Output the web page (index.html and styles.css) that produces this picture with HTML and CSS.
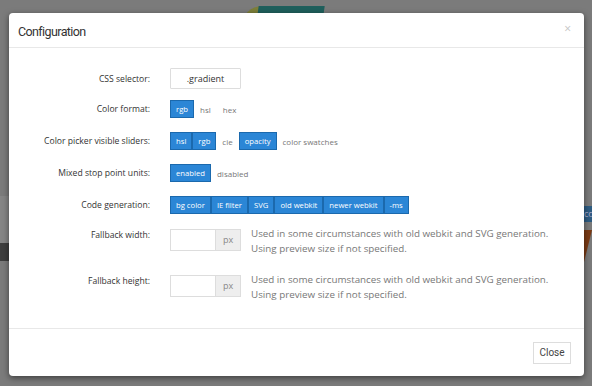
FILE: index.html
```html
<!DOCTYPE html>
<html lang="en">
<head>
    <meta charset="UTF-8">
    <title>Configuration</title>
    <link rel="stylesheet" href="styles.css">
</head>
<body>

<!-- page behind the overlay -->
<div class="backdrop">
    <div class="bg-arc"></div>
    <div class="bg-teal"></div>
    <div class="bg-left-light"></div>
    <div class="bg-left-dark"></div>
    <div class="bg-right-bar">co</div>
    <div class="bg-right-tri"></div>
</div>

<div class="modal">
    <div class="modal-header">
        <h4 class="modal-title">Configuration</h4>
        <span class="close">&times;</span>
    </div>

    <div class="modal-body">
        <div class="row row-input">
            <label>CSS selector:</label>
            <div class="controls">
                <input class="selector" type="text" value=".gradient">
            </div>
        </div>

        <div class="row">
            <label>Color format:</label>
            <div class="controls">
                <span class="btn active">rgb</span>
                <span class="opt">hsl</span>
                <span class="opt">hex</span>
            </div>
        </div>

        <div class="row">
            <label>Color picker visible sliders:</label>
            <div class="controls">
                <span class="btn active">hsl</span>
                <span class="btn active">rgb</span>
                <span class="opt">cie</span>
                <span class="btn active">opacity</span>
                <span class="opt">color swatches</span>
            </div>
        </div>

        <div class="row">
            <label>Mixed stop point units:</label>
            <div class="controls">
                <span class="btn active">enabled</span>
                <span class="opt">disabled</span>
            </div>
        </div>

        <div class="row">
            <label>Code generation:</label>
            <div class="controls">
                <span class="btn active">bg color</span>
                <span class="btn active">IE filter</span>
                <span class="btn active">SVG</span>
                <span class="btn active">old webkit</span>
                <span class="btn active">newer webkit</span>
                <span class="btn active">-ms</span>
            </div>
        </div>

        <div class="row row-size">
            <label>Fallback width:</label>
            <div class="controls">
                <div class="input-append">
                    <input type="text">
                    <span class="add-on">px</span>
                </div>
                <p class="help">Used in some circumstances with old webkit and SVG generation.<br>Using preview size if not specified.</p>
            </div>
        </div>

        <div class="row row-size">
            <label>Fallback height:</label>
            <div class="controls">
                <div class="input-append">
                    <input type="text">
                    <span class="add-on">px</span>
                </div>
                <p class="help">Used in some circumstances with old webkit and SVG generation.<br>Using preview size if not specified.</p>
            </div>
        </div>
    </div>

    <div class="modal-footer">
        <span class="btn-close">Close</span>
    </div>
</div>

</body>
</html>
```

FILE: styles.css
```css
body {
    margin: 0;
    background: #7b7b7b;
    font-family: "Open Sans", sans-serif;
    height: 386px;
    overflow: hidden;
    position: relative;
}

/* bits of the page under the overlay */
.backdrop div {
    position: absolute;
}
.bg-arc {
    left: 242px;
    top: 6px;
    width: 40px;
    height: 20px;
    border-radius: 40px 0 0 0;
    background: #7d7f3a;
}
.bg-teal {
    left: 258px;
    top: 6px;
    width: 66px;
    height: 10px;
    background: #1f5f5c;
    transform: skewX(-8deg);
}
.bg-left-light {
    left: 0;
    top: 196px;
    width: 10px;
    height: 48px;
    background: #858585;
}
.bg-left-dark {
    left: 0;
    top: 243px;
    width: 10px;
    height: 18px;
    background: #3e3e3e;
}
.bg-right-bar {
    left: 584px;
    top: 206px;
    width: 8px;
    height: 16px;
    background: #2e5c82;
    color: #aac;
    font-size: 9px;
    line-height: 16px;
    overflow: hidden;
}
.bg-right-tri {
    left: 584px;
    top: 230px;
    width: 0;
    height: 0;
    border-left: 8px solid #7a3a14;
    border-bottom: 32px solid transparent;
}

.modal {
    position: relative;
    margin: 13px 0 0 9px;
    width: 575px;
    height: 363px;
    background: #fff;
    border-radius: 4px;
    box-shadow: 0 2px 6px rgba(0, 0, 0, 0.5);
    display: flex;
    flex-direction: column;
}

.modal-header {
    height: 34px;
    border-bottom: 1px solid #e8e8e8;
    display: flex;
    align-items: center;
    justify-content: space-between;
    padding: 0 13px 0 9px;
}
.modal-title {
    margin: 2px 0 0;
    font-family: Roboto, sans-serif;
    font-weight: 400;
    font-size: 12.5px;
    letter-spacing: -0.6px;
    color: #333;
}
.close {
    color: #c4c4c4;
    font-size: 12px;
    margin-top: -4px;
}

.modal-body {
    flex: 1;
    padding: 20px 0 0;
    display: flex;
    flex-direction: column;
    gap: 14px;
}

.row {
    display: grid;
    grid-template-columns: 141px 1fr;
    column-gap: 20px;
    align-items: center;
    height: 18px;
}
.row-input {
    height: 21px;
    margin-bottom: -3px;
}
.row-size {
    height: 33px;
    align-items: start;
    margin-top: -4px;
    margin-bottom: 1px;
}
.row-size + .row-size {
    margin-top: -2px;
}
.row label {
    text-align: right;
    font-size: 8.6px;
    color: #333;
}
.row-size label {
    margin-top: 5px;
}

.controls {
    display: flex;
    align-items: center;
}

.selector {
    box-sizing: border-box;
    width: 71px;
    height: 21px;
    border: 1px solid #ddd;
    border-radius: 1px;
    text-align: center;
    font-family: "Open Sans", sans-serif;
    font-size: 9px;
    color: #333;
    padding: 0;
}

.btn {
    box-sizing: border-box;
    height: 18px;
    line-height: 16px;
    padding: 0 5px;
    font-size: 7.7px;
    color: #fff;
    background: #2b86d6;
    border: 1px solid #1b69ad;
}
.opt {
    font-size: 8px;
    color: #777;
    padding: 0 6px;
}

.input-append {
    display: flex;
    height: 22px;
}
.input-append input {
    box-sizing: border-box;
    width: 45px;
    height: 22px;
    border: 1px solid #ddd;
    border-right: none;
    padding: 0;
}
.add-on {
    box-sizing: border-box;
    width: 26px;
    height: 22px;
    line-height: 20px;
    text-align: center;
    background: #eee;
    border: 1px solid #ddd;
    font-size: 9px;
    color: #888;
}
.controls .help {
    margin: 2px 0 0 10px;
    font-size: 9.8px;
    line-height: 15px;
    color: #777;
}

.modal-footer {
    height: 47px;
    border-top: 1px solid #e8e8e8;
    display: flex;
    justify-content: flex-end;
    align-items: center;
    padding: 0 13px 0 0;
}
.btn-close {
    box-sizing: border-box;
    width: 38px;
    height: 22px;
    line-height: 20px;
    text-align: center;
    border: 1px solid #ddd;
    font-family: Roboto, sans-serif;
    font-size: 10px;
    color: #444;
    margin-top: 1px;
}
```
